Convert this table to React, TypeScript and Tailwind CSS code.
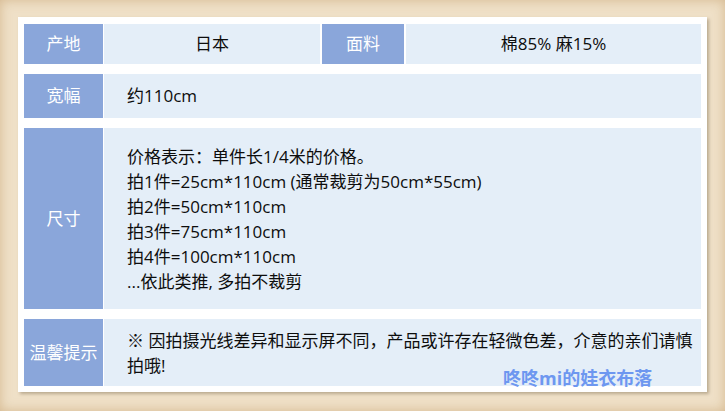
const font = { fontFamily: '"Open Sans", "Noto Sans CJK SC", sans-serif' };

const labelCls = 'flex items-center justify-center bg-[#8aa6da] text-white text-[17px]';
const valueCls = 'bg-[#e4eef8] text-[#0d0d0d] text-[17px]';

const sizes = [
  '价格表示：单件长1/4米的价格。',
  '拍1件=25cm*110cm (通常裁剪为50cm*55cm)',
  '拍2件=50cm*110cm',
  '拍3件=75cm*110cm',
  '拍4件=100cm*110cm',
  '...依此类推, 多拍不裁剪',
];

export default function App() {
  return (
    <div
      className="w-[725px] h-[411px] bg-[#efe0c7] shadow-[inset_0_0_12px_rgba(175,125,60,0.4)] pt-[17px] pl-[18px]"
      style={font}
    >
      <div className="w-[689px] h-[375px] bg-white pt-[7px] px-[6px] shadow-[2px_2px_3px_rgba(90,70,40,0.35)] flex flex-col gap-[10px]">
        {/* 产地 / 面料 */}
        <div className="flex h-[40px]">
          <div className={`${labelCls} w-[79px]`}>产地</div>
          <div className={`${valueCls} w-[216px] ml-[1px] flex items-center justify-center`}>日本</div>
          <div className={`${labelCls} w-[82px] ml-[2px]`}>面料</div>
          <div className={`${valueCls} w-[295px] ml-[2px] flex items-center justify-center`}>棉85% 麻15%</div>
        </div>

        {/* 宽幅 */}
        <div className="flex h-[44px]">
          <div className={`${labelCls} w-[79px]`}>宽幅</div>
          <div className={`${valueCls} flex-1 ml-[1px] flex items-center pl-[23px]`}>约110cm</div>
        </div>

        {/* 尺寸 */}
        <div className="flex h-[181px]">
          <div className={`${labelCls} w-[79px]`}>尺寸</div>
          <div className={`${valueCls} flex-1 ml-[1px] flex flex-col justify-center pl-[23px] leading-[25px]`}>
            {sizes.map((s) => (
              <p key={s}>{s}</p>
            ))}
          </div>
        </div>

        {/* 温馨提示 */}
        <div className="flex h-[67px]">
          <div className={`${labelCls} w-[79px]`}>温馨提示</div>
          <div className={`${valueCls} relative flex-1 ml-[1px] flex items-center pl-[23px] pr-[8px] leading-[25px]`}>
            <p>※ 因拍摄光线差异和显示屏不同，产品或许存在轻微色差，介意的亲们请慎拍哦!</p>
            <span className="absolute left-[399px] bottom-[-3px] text-[18px] font-bold text-[#6d97f0] leading-[22px]">
              咚咚mi的娃衣布落
            </span>
          </div>
        </div>
      </div>
    </div>
  );
}
